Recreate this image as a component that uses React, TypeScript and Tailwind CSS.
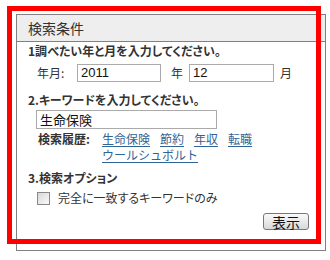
import React from 'react'

const font = { fontFamily: '"Noto Sans CJK JP", "Liberation Sans", sans-serif' }

function Link({ children }: { children: React.ReactNode }) {
  return (
    <a href="#" className="text-[#2f6496] underline underline-offset-2">
      {children}
    </a>
  )
}

export default function App() {
  return (
    <div className="relative h-[260px] w-[330px] bg-white text-[#333]" style={font}>
      <div className="absolute left-[16px] top-[14px] h-[237px] w-[310px] border border-[#808080]">
        <div className="flex h-[27px] items-center border-b border-[#808080] bg-[#eeeeee] pl-[11px] text-[14px] text-[#333]">
          検索条件
        </div>

        <div className="pl-[11px] pr-[16px]">
          <div className="mt-[1px] text-[12px] font-bold leading-[16px] [font-feature-settings:'palt']">
            1調べたい年と月を入力してください。
          </div>
          <div className="mt-[5px] flex h-[18px] items-center pl-[9px] text-[12px]">
            <span className="w-[40px]">年月:</span>
            <input
              defaultValue="2011"
              className="h-[18px] w-[84px] border border-[#aaa] px-[3px] text-[13px] text-[#111] outline-none"
              style={{ fontFamily: '"Liberation Sans", sans-serif' }}
            />
            <span className="ml-[10px] w-[18px]">年</span>
            <input
              defaultValue="12"
              className="h-[18px] w-[85px] border border-[#aaa] px-[3px] text-[13px] text-[#111] outline-none"
              style={{ fontFamily: '"Liberation Sans", sans-serif' }}
            />
            <span className="ml-[6px]">月</span>
          </div>

          <div className="mt-[10px] text-[12px] font-bold leading-[16px] [font-feature-settings:'palt']">
            2.キーワードを入力してください。
          </div>
          <input
            defaultValue="生命保険"
            className="ml-[8px] mt-[2px] block h-[19px] w-[181px] border border-[#aaa] px-[3px] text-[13px] text-[#111] outline-none"
            style={font}
          />
          <div className="mt-[2px] flex pl-[10px] text-[12px] leading-[16px]">
            <span className="w-[64px] shrink-0 font-bold">検索履歴:</span>
            <div className="flex flex-wrap gap-x-[10px]">
              <Link>生命保険</Link>
              <Link>節約</Link>
              <Link>年収</Link>
              <Link>転職</Link>
              <Link>ウールシュボルト</Link>
            </div>
          </div>

          <div className="mt-[7px] text-[12px] font-bold leading-[16px] [font-feature-settings:'palt']">
            3.検索オプション
          </div>
          <label className="mt-[4px] flex items-center pl-[9px] text-[12px] leading-[16px] [font-feature-settings:'palt']">
            <span className="h-[13px] w-[13px] border border-[#888] bg-gradient-to-br from-[#d8d8d8] to-[#fafafa]" />
            <span className="ml-[8px]">完全に一致するキーワードのみ</span>
          </label>

          <div className="mt-[7px] flex justify-end">
            <button className="flex h-[17px] w-[46px] items-center justify-center rounded-[3px] border border-[#777] bg-gradient-to-b from-[#fafafa] to-[#d9d9d9] text-[14px] leading-none text-[#111]">
              表示
            </button>
          </div>
        </div>
      </div>

      <div className="pointer-events-none absolute left-[7px] top-[6px] h-[238px] w-[314px] border-[5px] border-[#ff0000]" />
    </div>
  )
}
